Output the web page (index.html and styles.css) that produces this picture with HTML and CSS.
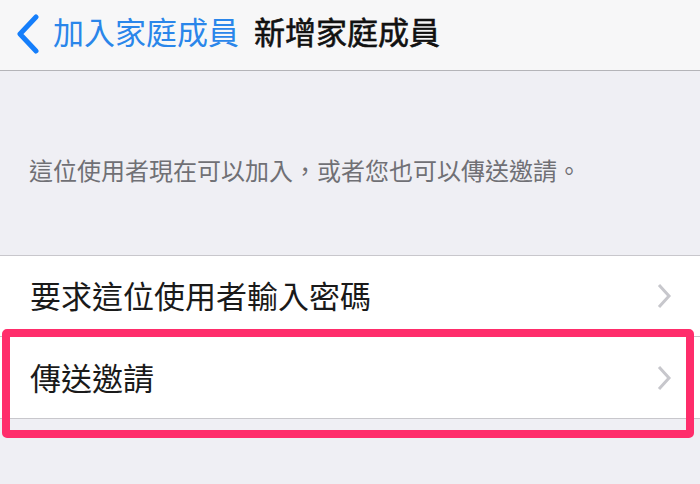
FILE: index.html
```html
<!DOCTYPE html>
<html lang="zh-Hant">
<head>
<meta charset="utf-8">
<link rel="stylesheet" href="styles.css">
</head>
<body>
<header class="nav">
  <svg class="back-icon" width="26" height="40" viewBox="0 0 26 40"><polyline points="22,3 6,20 22,37" fill="none" stroke="#157efb" stroke-width="5" stroke-linecap="round" stroke-linejoin="round"/></svg>
  <span class="back-text">加入家庭成員</span>
  <span class="title">新增家庭成員</span>
</header>
<p class="desc">這位使用者現在可以加入，或者您也可以傳送邀請。</p>
<section class="group">
  <div class="row">
    <span class="label">要求這位使用者輸入密碼</span>
    <svg class="chev" width="16" height="26" viewBox="0 0 16 26"><polyline points="3,2 13,13 3,24" fill="none" stroke="#c7c7cc" stroke-width="3"/></svg>
  </div>
  <div class="row last">
    <span class="label">傳送邀請</span>
    <svg class="chev" width="16" height="26" viewBox="0 0 16 26"><polyline points="3,2 13,13 3,24" fill="none" stroke="#c7c7cc" stroke-width="3"/></svg>
    <div class="highlight"></div>
  </div>
</section>
</body>
</html>
```
FILE: styles.css
```css
html, body {
  margin: 0;
  padding: 0;
}
body {
  width: 700px;
  height: 484px;
  overflow: hidden;
  background: #efeff4;
  font-family: "Noto Sans CJK TC", "Noto Sans", sans-serif;
}
.nav {
  height: 70px;
  background: #f7f7f8;
  border-bottom: 1px solid #b4b4b8;
  display: flex;
  align-items: center;
  padding-left: 14px;
  box-sizing: content-box;
}
.back-icon {
  flex: none;
  margin-top: -2px;
}
.back-text {
  margin-left: 13px;
  font-size: 31px;
  font-weight: 400;
  color: #2a86ea;
  line-height: 40px;
  margin-top: -8px;
}
.title {
  margin-left: 15px;
  font-size: 31px;
  font-weight: 400;
  -webkit-text-stroke: 0.6px #111;
  color: #111;
  line-height: 40px;
  margin-top: -8px;
}
.desc {
  margin: 0;
  padding: 82px 0 0 29px;
  height: 102px;
  font-size: 24px;
  font-weight: 400;
  line-height: 34px;
  color: #707075;
}
.group {
  background: #fff;
  border-top: 1px solid #c8c7cc;
  border-bottom: 1px solid #c8c7cc;
}
.row {
  position: relative;
  height: 80px;
  display: flex;
  align-items: center;
  justify-content: space-between;
  padding: 0 28px 0 30px;
  border-bottom: 1px solid #c8c7cc;
}
.row.last {
  border-bottom: none;
  height: 81px;
}
.label {
  font-size: 31px;
  font-weight: 400;
  color: #1a1a1a;
  line-height: 40px;
  margin-top: -2px;
}
.chev {
  flex: none;
}
.highlight {
  position: absolute;
  left: 2px;
  right: 6px;
  top: -8px;
  bottom: -20px;
  border: 8px solid #ff2d6b;
  border-radius: 5px;
}
```
